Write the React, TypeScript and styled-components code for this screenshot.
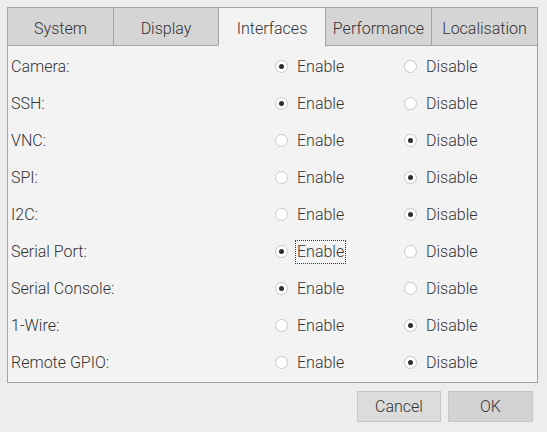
import React, { useState } from 'react';
import styled, { createGlobalStyle } from 'styled-components';

const GlobalStyle = createGlobalStyle`
  html, body {
    margin: 0;
    padding: 0;
    background: #ededed;
    font-family: Roboto, "Liberation Sans", sans-serif;
    font-weight: 300;
    color: #333333;
  }
`;

const Window = styled.div`
  width: 547px;
  height: 432px;
  box-sizing: border-box;
  padding: 7px 10px 0 7px;
  display: flex;
  flex-direction: column;
`;

const TabBar = styled.div`
  display: flex;
  width: 531px;
`;

const Tab = styled.div<{ $active?: boolean; $w: number }>`
  width: ${p => p.$w}px;
  height: 39px;
  box-sizing: border-box;
  display: flex;
  align-items: center;
  justify-content: center;
  padding-top: 4px;
  font-size: 16px;
  background: ${p => (p.$active ? '#f3f3f3' : '#d5d5d5')};
  border: 1px solid #a3a3a3;
  border-bottom: ${p => (p.$active ? '1px solid transparent' : '1px solid #a3a3a3')};
  margin-left: -1px;
  &:first-child { margin-left: 0; }
`;

const Panel = styled.div`
  width: 531px;
  height: 337px;
  box-sizing: border-box;
  border: 1px solid #a3a3a3;
  border-top: none;
  background: #f3f3f3;
  padding: 2px 0 0 3px;
`;

const Row = styled.div`
  height: 37px;
  display: grid;
  grid-template-columns: 264px 129px 1fr;
  align-items: center;
  font-size: 16px;
`;

const Option = styled.label`
  display: flex;
  align-items: center;
  gap: 6px;
  cursor: pointer;
`;

const Radio = styled.span<{ $on: boolean }>`
  width: 13px;
  height: 13px;
  box-sizing: border-box;
  border-radius: 50%;
  border: 1px solid #c9c9c9;
  background: #ffffff;
  display: flex;
  align-items: center;
  justify-content: center;
  margin-right: 3px;
  &::after {
    content: '';
    width: 5px;
    height: 5px;
    border-radius: 50%;
    background: ${p => (p.$on ? '#2e2e2e' : 'transparent')};
  }
`;

const OptionText = styled.span<{ $focus?: boolean }>`
  padding: 2px 1px;
  margin-left: -2px;
  border: 1px dotted ${p => (p.$focus ? '#3c3c3c' : 'transparent')};
  line-height: 18px;
`;

const Footer = styled.div`
  display: flex;
  justify-content: flex-end;
  gap: 7px;
  padding: 8px 4px 0 0;
`;

const Button = styled.button<{ $primary?: boolean }>`
  width: ${p => (p.$primary ? 85 : 84)}px;
  height: 31px;
  font-family: Roboto, "Liberation Sans", sans-serif;
  font-weight: 300;
  font-size: 16px;
  color: #333333;
  background: ${p => (p.$primary ? '#d3d3d3' : '#dcdcdc')};
  border: 1px solid #c6c6c6;
  border-radius: 0;
  padding: 0;
`;

const tabs = [
  { name: 'System', w: 107 },
  { name: 'Display', w: 106 },
  { name: 'Interfaces', w: 108 },
  { name: 'Performance', w: 107 },
  { name: 'Localisation', w: 107 },
];

const initial: [string, boolean][] = [
  ['Camera:', true],
  ['SSH:', true],
  ['VNC:', false],
  ['SPI:', false],
  ['I2C:', false],
  ['Serial Port:', true],
  ['Serial Console:', true],
  ['1-Wire:', false],
  ['Remote GPIO:', false],
];

const App: React.FC = () => {
  const [values, setValues] = useState(initial.map(r => r[1]));
  const set = (i: number, v: boolean) =>
    setValues(vs => vs.map((x, j) => (j === i ? v : x)));

  return (
    <Window>
      <GlobalStyle />
      <TabBar>
        {tabs.map(t => (
          <Tab key={t.name} $w={t.w} $active={t.name === 'Interfaces'}>
            {t.name}
          </Tab>
        ))}
      </TabBar>
      <Panel>
        {initial.map(([label], i) => (
          <Row key={label}>
            <span>{label}</span>
            <Option onClick={() => set(i, true)}>
              <Radio $on={values[i]} />
              <OptionText $focus={label === 'Serial Port:'}>Enable</OptionText>
            </Option>
            <Option onClick={() => set(i, false)}>
              <Radio $on={!values[i]} />
              <OptionText>Disable</OptionText>
            </Option>
          </Row>
        ))}
      </Panel>
      <Footer>
        <Button>Cancel</Button>
        <Button $primary>OK</Button>
      </Footer>
    </Window>
  );
};

export default App;
